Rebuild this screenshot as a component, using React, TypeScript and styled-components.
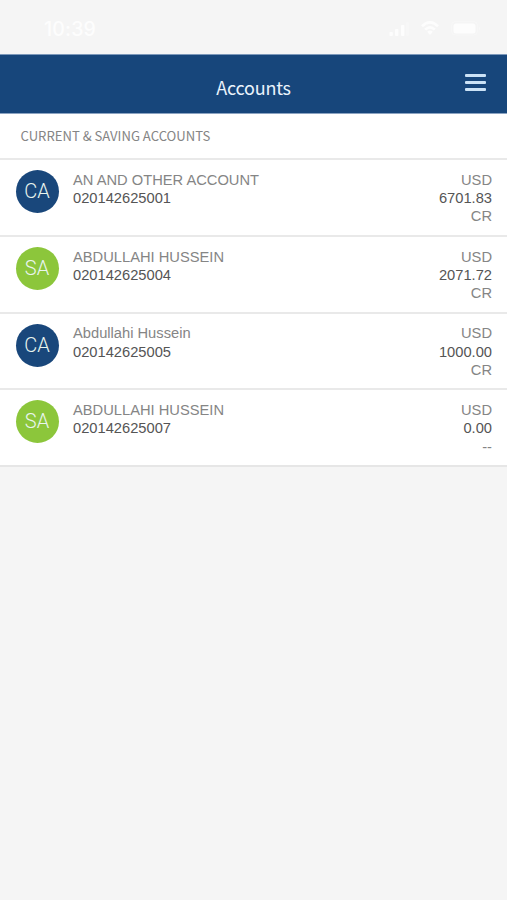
import React from 'react';
import styled, { createGlobalStyle } from 'styled-components';

const GlobalStyle = createGlobalStyle`
  * { box-sizing: border-box; }
  body { margin: 0; background: #f5f5f5; }
`;

const Screen = styled.div`
  width: 100%;
  height: 900px;
  overflow: hidden;
  display: flex;
  flex-direction: column;
  background: #f5f5f5;
  font-family: 'Liberation Sans', Arial, sans-serif;
`;

const StatusBar = styled.div`
  height: 54px;
  flex: none;
  display: flex;
  justify-content: space-between;
  padding: 17px 26px 0 44px;
  color: #fdfdfd;
`;

const Clock = styled.span`
  font: 500 19.5px/24px Inter, sans-serif;
  letter-spacing: 0.2px;
`;

const StatusIcons = styled.div`
  display: flex;
  gap: 12px;
  padding-top: 3px;
`;

const Header = styled.header`
  height: 60px;
  flex: none;
  display: grid;
  grid-template-columns: 60px 1fr 60px;
  background: #17467b;
  border-top: 1px solid #7c98ba;
  border-bottom: 1px solid #8ba3c1;
`;

const Title = styled.h1`
  grid-column: 2;
  margin: 0;
  padding-top: 19px;
  text-align: center;
  font: 400 18px/26px 'Noto Sans CJK SC', 'Noto Sans', sans-serif;
  letter-spacing: -0.2px;
  color: #eaf3fc;
`;

const MenuButton = styled.button`
  border: 0;
  padding: 19px 21px 0 0;
  background: none;
  display: flex;
  flex-direction: column;
  align-items: flex-end;
  gap: 4px;
`;

const MenuBar = styled.span`
  width: 21px;
  height: 3px;
  border-radius: 1px;
  background: #cbe2f6;
`;

const SectionTitle = styled.h2`
  height: 44.2px;
  flex: none;
  margin: 0;
  padding: 12px 0 0 20.5px;
  background: #fff;
  font: 400 13.1px/20px 'Noto Sans CJK SC', 'Noto Sans', sans-serif;
  color: #858585;
`;

const List = styled.ul`
  list-style: none;
  margin: 0;
  padding: 0;
  flex: none;
  background: #fff;
  border-bottom: 2px solid #e6e6e6;
`;

const Row = styled.li`
  height: 76.75px;
  display: flex;
  border-top: 2px solid #e9e9e9;
  padding: 10.8px 15px 0 15.5px;
`;

const Avatar = styled.div<{ $kind: string }>`
  width: 43px;
  height: 43px;
  flex: none;
  margin-top: -0.8px;
  border-radius: 50%;
  background: ${({ $kind }) => ($kind === 'CA' ? '#19477b' : '#8cc63b')};
  color: #e9f5ee;
  text-align: center;
  font: 300 20px/42px Roboto, sans-serif;
`;

const Details = styled.div`
  flex: 1;
  margin-left: 14.5px;
  font-size: 14.7px;
  line-height: 18.2px;
`;

const Amounts = styled(Details)`
  flex: none;
  text-align: right;
`;

const Label = styled.div`
  color: #858585;
`;

const Value = styled.div`
  color: #555;
`;

interface Account {
  kind: string;
  name: string;
  number: string;
  balance: string;
  side: string;
}

const accounts: Account[] = [
  { kind: 'CA', name: 'AN AND OTHER ACCOUNT', number: '020142625001', balance: '6701.83', side: 'CR' },
  { kind: 'SA', name: 'ABDULLAHI HUSSEIN', number: '020142625004', balance: '2071.72', side: 'CR' },
  { kind: 'CA', name: 'Abdullahi Hussein', number: '020142625005', balance: '1000.00', side: 'CR' },
  { kind: 'SA', name: 'ABDULLAHI HUSSEIN', number: '020142625007', balance: '0.00', side: '--' },
];

const Signal = () => (
  <svg width="20" height="17" viewBox="0 0 20 17" fill="currentColor">
    <rect x="0.5" y="12" width="3.4" height="4" rx="1" />
    <rect x="6" y="9" width="3.4" height="7" rx="1" />
    <rect x="12" y="5" width="3.4" height="11" rx="1" />
    <rect x="17" y="2" width="3" height="14" rx="1" opacity="0.2" />
  </svg>
);

const Wifi = () => (
  <svg width="18" height="17" viewBox="0 0 18 17" fill="none" stroke="currentColor" strokeWidth="2.6">
    <path d="M1 6.2Q9-1.6 17 6.2" />
    <path d="M4.2 9.6Q9 5 13.8 9.6" />
    <path d="M6.2 11.8Q9 9.2 11.8 11.8L9 15Z" fill="currentColor" stroke="none" />
  </svg>
);

const Battery = () => (
  <svg width="30" height="17" viewBox="0 0 30 17" fill="none">
    <rect x="0.5" y="1.5" width="26" height="13.5" rx="4" stroke="currentColor" opacity="0.35" />
    <rect x="2.5" y="3.5" width="22" height="10" rx="2.5" fill="currentColor" />
    <path d="M28 6v4.500q2-2.2 0-4.500Z" fill="currentColor" opacity="0.4" />
  </svg>
);

export default function App() {
  return (
    <Screen>
      <GlobalStyle />
      <StatusBar>
        <Clock>10:39</Clock>
        <StatusIcons>
          <Signal />
          <Wifi />
          <Battery />
        </StatusIcons>
      </StatusBar>
      <Header>
        <Title>Accounts</Title>
        <MenuButton aria-label="Menu">
          <MenuBar />
          <MenuBar />
          <MenuBar />
        </MenuButton>
      </Header>
      <SectionTitle>CURRENT &amp; SAVING ACCOUNTS</SectionTitle>
      <List>
        {accounts.map((a) => (
          <Row key={a.number}>
            <Avatar $kind={a.kind}>{a.kind}</Avatar>
            <Details>
              <Label>{a.name}</Label>
              <Value>{a.number}</Value>
            </Details>
            <Amounts>
              <Label>USD</Label>
              <Value>{a.balance}</Value>
              <Label>{a.side}</Label>
            </Amounts>
          </Row>
        ))}
      </List>
    </Screen>
  );
}
